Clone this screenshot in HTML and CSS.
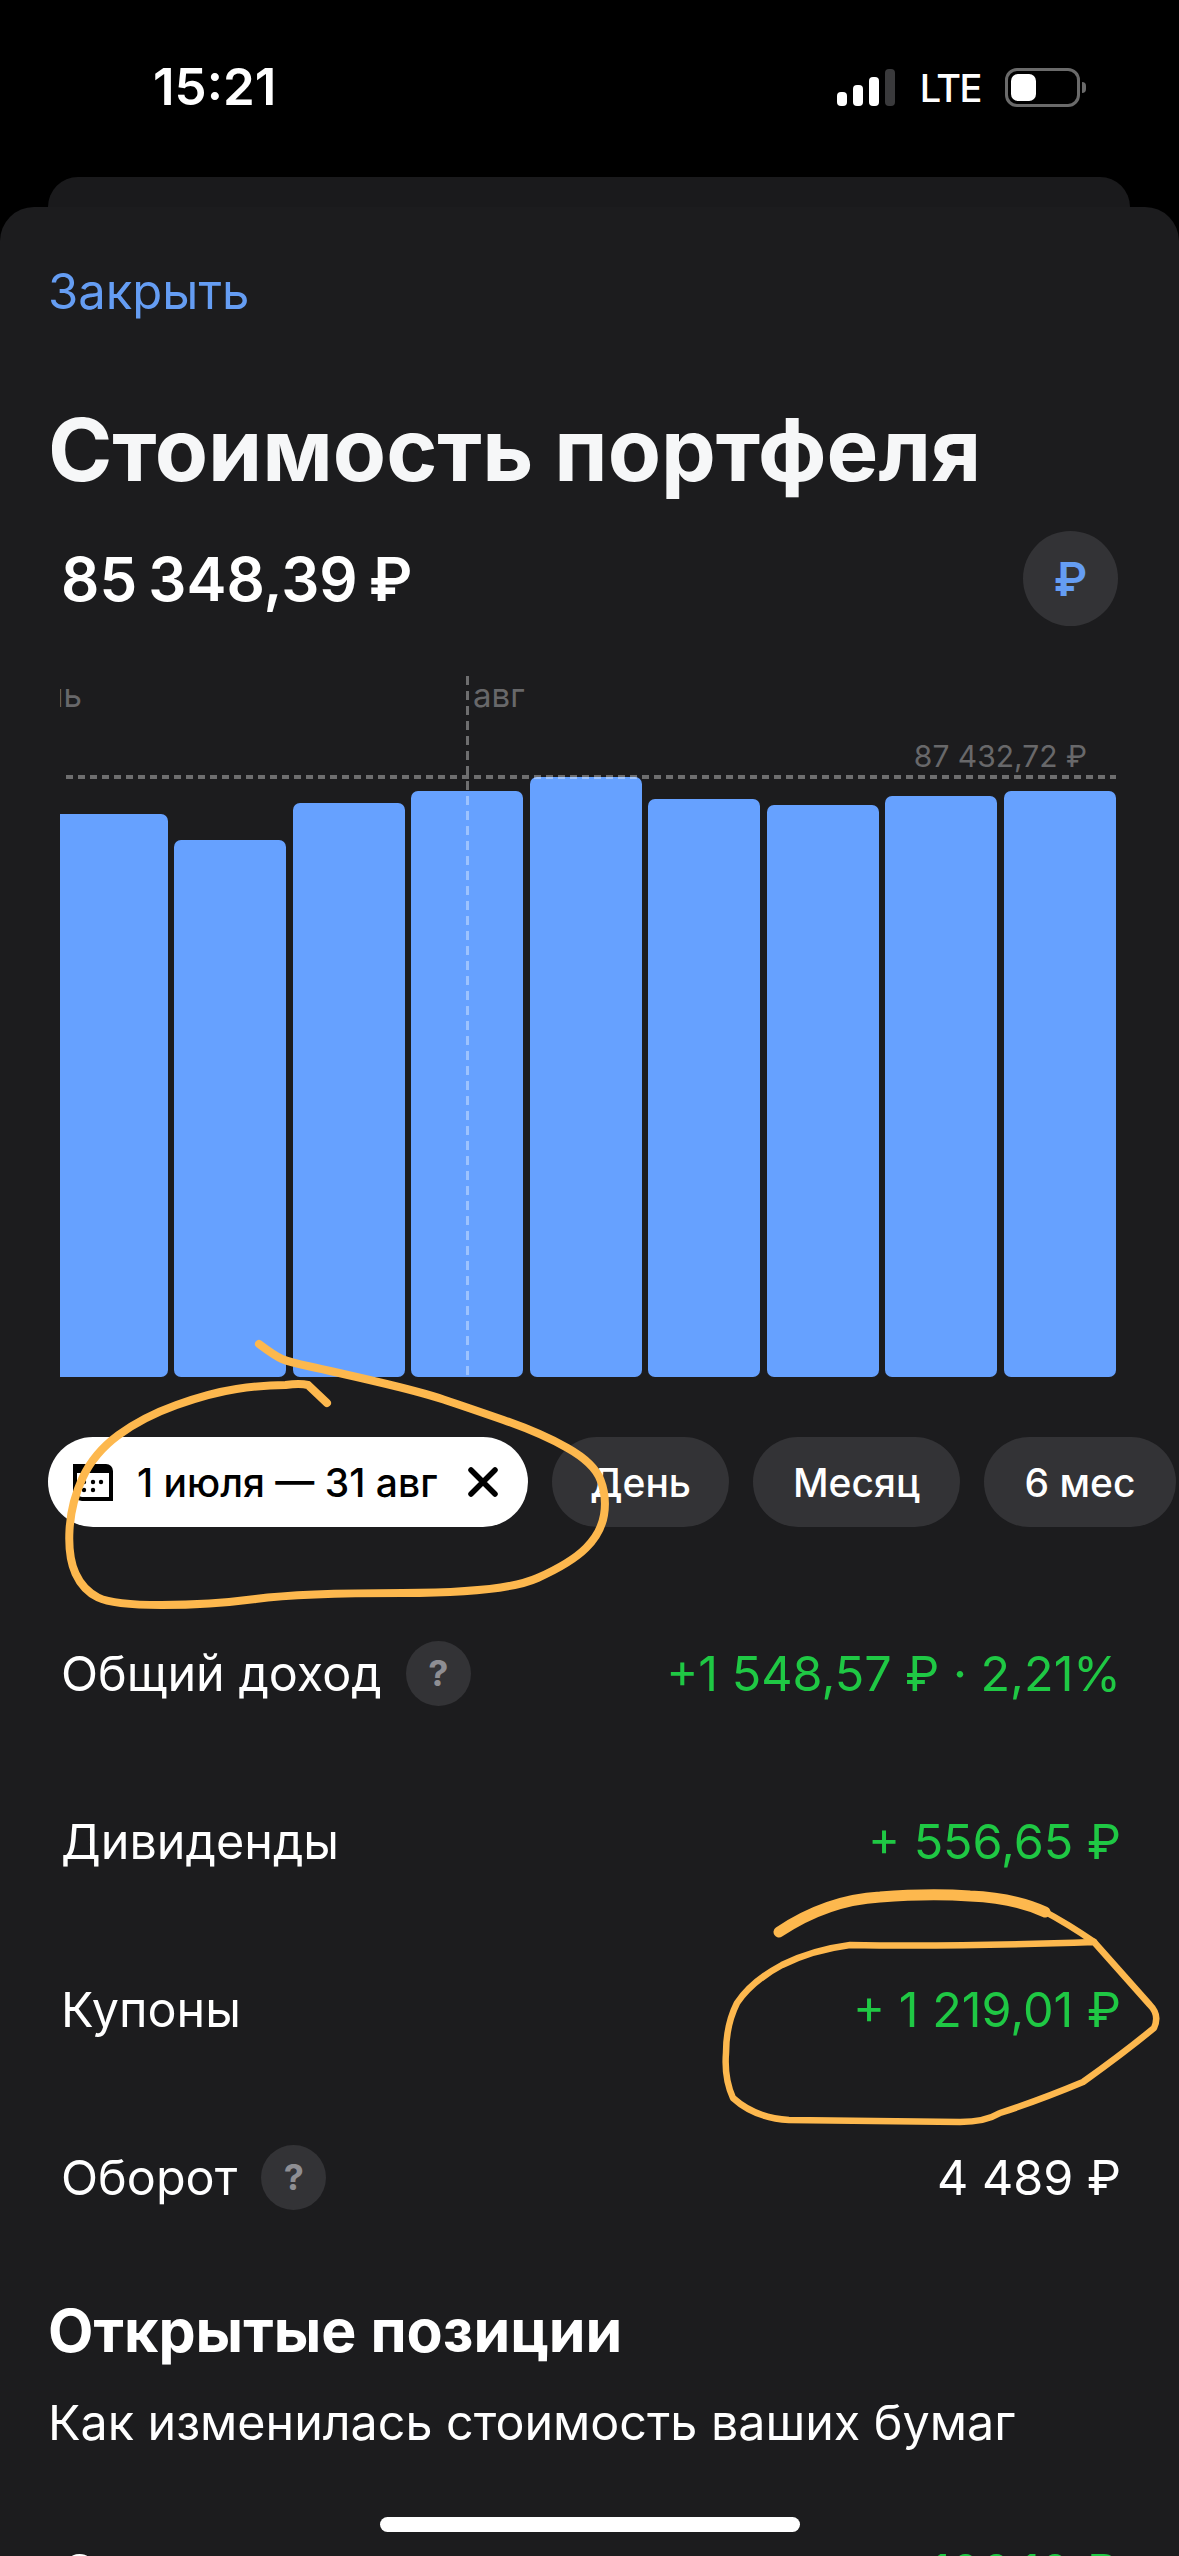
FILE: index.html
```html
<!DOCTYPE html>
<html lang="ru">
<head>
  <meta charset="UTF-8" />
  <meta name="viewport" content="width=device-width, initial-scale=1.0" />
  <title>Стоимость портфеля</title>
  <link rel="stylesheet" href="styles.css">
</head>
<body>
  <div class="screen">
    <div class="status">
      <span class="time">15:21</span>
      <div class="status-right">
        <div class="signal">
          <i class="b1"></i><i class="b2"></i><i class="b3"></i><i class="b4"></i>
        </div>
        <span class="lte">LTE</span>
        <div class="battery"><div class="charge"></div></div>
        <div class="nub"></div>
      </div>
    </div>

    <div class="back-sheet"></div>
    <div class="sheet">
      <a class="close">Закрыть</a>
      <h1 class="title">Стоимость портфеля</h1>
      <div class="total">
        <span class="total-sum">85 348,39 ₽</span>
        <div class="currency">₽</div>
      </div>

      <div class="chart">
        <span class="month month-jul">июль</span>
        <span class="month month-aug">авг</span>
        <span class="max">87 432,72 ₽</span>
        <div class="bars">
          <div class="bar first" style="height: 563px"></div>
          <div class="bar" style="height: 537px"></div>
          <div class="bar" style="height: 574px"></div>
          <div class="bar" style="height: 586px"></div>
          <div class="bar" style="height: 600px"></div>
          <div class="bar" style="height: 578px"></div>
          <div class="bar" style="height: 572px"></div>
          <div class="bar" style="height: 581px"></div>
          <div class="bar" style="height: 586px"></div>
        </div>
        <div class="line-h"></div>
        <div class="line-v"></div>
      </div>

      <div class="chips">
        <div class="chip active">
          <svg class="cal" viewBox="0 0 40 37" width="40" height="37">
            <path d="M0 0H33A7 7 0 0 1 40 7V37H9A9 9 0 0 1 0 28Z" fill="#000"/>
            <path d="M4 9H36V33H9A5 5 0 0 1 4 28Z" fill="#fff"/>
            <circle cx="11" cy="18" r="2.2"/><circle cx="20" cy="18" r="2.2"/><circle cx="28" cy="18" r="2.2"/>
            <circle cx="11" cy="26" r="2.2"/><circle cx="20" cy="26" r="2.2"/>
          </svg>
          <span>1 июля — 31 авг</span>
          <svg class="cross" viewBox="0 0 30 30" width="30" height="30">
            <path d="M3 3L27 27M27 3L3 27" stroke="#000" stroke-width="5.5" stroke-linecap="round"/>
          </svg>
        </div>
        <div class="chip day">День</div>
        <div class="chip month-chip">Месяц</div>
        <div class="chip half">6 мес</div>
      </div>

      <div class="rows">
        <div class="row">
          <div class="row-label">Общий доход <span class="help">?</span></div>
          <div class="green">+1 548,57 ₽ · 2,21%</div>
        </div>
        <div class="row">
          <div class="row-label">Дивиденды</div>
          <div class="green">+ 556,65 ₽</div>
        </div>
        <div class="row">
          <div class="row-label">Купоны</div>
          <div class="green">+ 1 219,01 ₽</div>
        </div>
        <div class="row">
          <div class="row-label">Оборот <span class="help">?</span></div>
          <div>4 489 ₽</div>
        </div>
      </div>

      <h2 class="subtitle">Открытые позиции</h2>
      <p class="note">Как изменилась стоимость ваших бумаг</p>
      <div class="row cut">
        <div class="row-label">Сургут</div>
        <div class="green">+ 100,10 ₽</div>
      </div>
    </div>

    <div class="home"></div>

    <!-- hand drawn marks on top of the screenshot -->
    <svg class="scribble" viewBox="0 0 1179 2556" width="1179" height="2556" fill="none" stroke="#fdb84e" stroke-linecap="round" stroke-linejoin="round">
      <path stroke-width="8" d="M259 1344Q275 1356 282 1359Q289 1362 310 1366.5Q331 1371 376 1381.5Q421 1392 443.5 1399.5Q466 1407 503.5 1420Q541 1433 567.5 1448Q594 1463 600.5 1480Q607 1497 604 1515Q601 1533 586 1548Q571 1563 537.5 1578Q504 1593 402.5 1593Q301 1593 255.5 1599Q210 1605 161.5 1605Q113 1605 98 1597.5Q83 1590 75.5 1573.5Q68 1557 69.5 1530Q71 1503 82.5 1478Q94 1453 118.5 1435Q143 1417 176.5 1405Q210 1393 236.5 1389Q263 1385 285.5 1385Q300 1383 308 1385L327 1403"/>
      <path stroke-width="11" d="M779 1932Q827 1900 880 1897Q930 1893 970 1896Q1015 1898 1045 1912"/>
      <path stroke-width="6.5" d="M1040 1909Q1070 1925 1094 1942"/>
      <path stroke-width="6.5" d="M1094 1942Q950 1947 850 1945Q812 1950 782 1965Q752 1981 737 2003Q726 2025 726 2053Q724 2078 733 2098Q755 2118 789 2120L960 2122Q985 2122 1000 2113Q1040 2100 1083 2082Q1125 2052 1154 2028Q1160 2015 1150 2005L1094 1942"/>
    </svg>
  </div>
</body>
</html>
```

FILE: styles.css
```css
* {
  box-sizing: border-box;
}

body {
  margin: 0;
  background: #000;
  font-family: Inter, "Noto Sans", sans-serif;
  color: #fff;
}

.screen {
  position: relative;
  width: 1179px;
  height: 2556px;
  overflow: hidden;
  background: #000;
}

.status {
  display: flex;
  justify-content: space-between;
  align-items: flex-start;
  height: 177px;
  padding: 0 93px 0 153px;
}

.time {
  margin-top: 57px;
  font-size: 51px;
  line-height: 60px;
  font-weight: 600;
}

.status-right {
  display: flex;
  align-items: center;
  margin-top: 68px;
  height: 39px;
}

.signal {
  display: flex;
  align-items: flex-end;
  gap: 6px;
  height: 37px;
  margin-right: 25px;
}

.signal i {
  display: block;
  width: 10px;
  border-radius: 4px;
  background: #fff;
}

.b1 { height: 14px; }
.b2 { height: 21px; }
.b3 { height: 29px; }
.signal .b4 { height: 37px; background: #3a3a3c; }

.lte {
  font-size: 38px;
  letter-spacing: -1.5px;
  font-weight: 500;
  margin-right: 24px;
}

.battery {
  width: 75px;
  height: 39px;
  padding: 3px;
  border: 3px solid #6a6a6a;
  border-radius: 12px;
}

.charge {
  width: 25px;
  height: 27px;
  background: #fff;
  border-radius: 7px;
}

.nub {
  width: 4px;
  height: 11px;
  margin-left: 2px;
  background: #6a6a6a;
  border-radius: 0 5px 5px 0;
}

.back-sheet {
  height: 60px;
  margin: 0 49px -30px 48px;
  background: #1a1a1c;
  border-radius: 30px 30px 0 0;
}

.sheet {
  position: relative;
  height: 2349px;
  padding: 0 0 0 48px;
  background: #1c1c1e;
  border-radius: 34px 34px 0 0;
}

.close {
  display: block;
  padding-top: 56px;
  font-size: 49px;
  line-height: 58px;
  color: #659df3;
}

.title {
  margin: 76px 0 0;
  font-size: 87px;
  line-height: 106px;
  font-weight: 700;
  color: #f6f7f8;
}

.total {
  display: flex;
  justify-content: space-between;
  align-items: center;
  height: 95px;
  margin-top: 28px;
  padding: 0 61px 0 13px;
}

.total-sum {
  font-size: 60px;
  word-spacing: -4px;
  font-weight: 600;
}

.currency {
  display: flex;
  justify-content: center;
  align-items: center;
  width: 95px;
  height: 95px;
  border-radius: 50%;
  background: #333336;
  color: #659df3;
  font-size: 46px;
  font-weight: 600;
}

.chart {
  position: relative;
  width: 1056px;
  height: 701px;
  margin: 50px 0 0 12px;
  overflow: hidden;
}

.bars {
  position: absolute;
  left: 0;
  right: 0;
  bottom: 0;
  display: flex;
  align-items: flex-end;
  gap: 6.5px;
}

.bar {
  flex: none;
  width: 112px;
  background: #66a1ff;
  border-radius: 7px;
}

.bar.first {
  width: 107.5px;
  border-radius: 0 7px 7px 0;
}

.month,
.max {
  position: absolute;
  line-height: 36px;
  color: #68686a;
}

.month {
  font-size: 33px;
}

.max {
  font-size: 30px;
  top: 62px;
  right: 29px;
}

.month-jul {
  top: 1px;
  right: 1034px;
}

.month-aug {
  top: 1px;
  left: 413px;
}

.line-h {
  position: absolute;
  top: 99px;
  left: 6px;
  right: 0;
  height: 4px;
  background: repeating-linear-gradient(90deg, rgba(255,255,255,.36) 0 7px, transparent 7px 12px);
}

.line-v {
  position: absolute;
  top: 0;
  bottom: 0;
  left: 406px;
  width: 3px;
  background: repeating-linear-gradient(180deg, rgba(255,255,255,.36) 0 9px, transparent 9px 15px);
}

.chips {
  display: flex;
  gap: 24px;
  margin-top: 60px;
}

.chip {
  flex: none;
  display: flex;
  justify-content: center;
  align-items: center;
  height: 90px;
  border-radius: 45px;
  background: #333336;
  font-size: 39px;
  font-weight: 500;
}

.chip.active {
  gap: 24px;
  width: 480px;
  padding: 0 30px 0 25px;
  background: #fff;
  color: #000;
}

.chip.active span {
  white-space: nowrap;
}

.chip.active .cross {
  margin-left: auto;
}

.day { width: 177px; }
.month-chip { width: 207px; }
.half { width: 192px; }

.rows {
  margin-top: 62px;
  padding-right: 58px;
}

.row {
  display: flex;
  justify-content: space-between;
  align-items: center;
  height: 168px;
  padding-left: 13px;
  font-size: 48.5px;
}

.row-label {
  display: flex;
  align-items: center;
  gap: 24px;
}

.help {
  display: flex;
  justify-content: center;
  align-items: center;
  width: 65px;
  height: 65px;
  border-radius: 50%;
  background: #333336;
  color: #8e8e93;
  font-size: 36px;
  font-weight: 700;
}

.green {
  color: #1fc844;
}

.subtitle {
  margin: 36px 0 0;
  font-size: 59px;
  line-height: 68px;
  font-weight: 700;
}

.note {
  margin: 29px 0 0;
  font-size: 48.4px;
  line-height: 58px;
}

.row.cut {
  height: auto;
  margin-top: 90px;
  padding: 0 61px 0 13px;
}

.home {
  position: absolute;
  left: 380px;
  top: 2517px;
  width: 420px;
  height: 15px;
  border-radius: 8px;
  background: #fff;
}

.scribble {
  position: absolute;
  left: 0;
  top: 0;
  pointer-events: none;
}
```
